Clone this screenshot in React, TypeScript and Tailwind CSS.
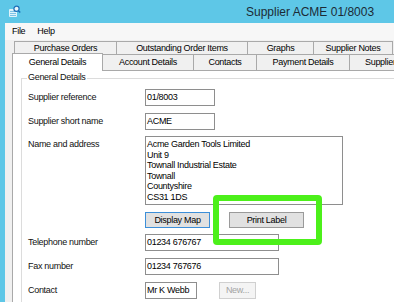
import React from "react";

const font = "font-['Liberation_Sans',Arial,sans-serif]";

function Row({ label, children, className = "" }: { label: string; children: React.ReactNode; className?: string }) {
  return (
    <div className={`flex items-center h-[17px] ${className}`}>
      <div className="w-[117px] shrink-0 text-[#111]">{label}</div>
      {children}
    </div>
  );
}

function Input({ value, w }: { value: string; w: string }) {
  return (
    <div className={`${w} h-[17px] border border-[#8e8e8e] bg-white pl-[1px] flex items-center text-black whitespace-nowrap overflow-hidden`}>
      {value}
    </div>
  );
}

export default function App() {
  return (
    <div className={`w-[394px] h-[302px] overflow-hidden bg-[#5ec7e7] ${font} text-[9px] leading-[11px] tracking-[-0.3px] relative`}>
      {/* title bar */}
      <div className="h-[23px] flex items-center">
        <svg className="ml-[8px] shrink-0" width="13" height="13" viewBox="0 0 13 13">
          <rect x="1" y="4" width="8" height="8" rx="1" fill="#dff3fb" />
          <rect x="2" y="6" width="6" height="1" fill="#7fc3e6" />
          <rect x="2" y="8" width="6" height="1" fill="#7fc3e6" />
          <rect x="2" y="10" width="6" height="1" fill="#7fc3e6" />
          <circle cx="8.5" cy="3.8" r="2.6" fill="#eaf7fd" stroke="#1d6fb8" strokeWidth="1.2" />
          <line x1="10.4" y1="5.7" x2="12.2" y2="7.5" stroke="#1d6fb8" strokeWidth="1.5" />
        </svg>
        <div className="ml-[225px] text-[12px] tracking-normal leading-[16px] text-[#1c2b36] whitespace-nowrap">
          Supplier ACME 01/8003
        </div>
      </div>

      {/* window body */}
      <div className="ml-[5px] h-[279px] bg-[#f0f0f0] flex flex-col">
        {/* menu */}
        <div className="h-[17px] bg-[#f7f7f7] flex items-center pl-[7px] gap-[12px] text-black">
          <span>File</span>
          <span>Help</span>
        </div>

        {/* tab row 1 */}
        <div className="mt-[1px] ml-[9px] flex h-[13px] whitespace-nowrap text-black">
          <div className="w-[102px] border-l border-t border-[#a9a9a9] flex items-center justify-center">Purchase Orders</div>
          <div className="w-[131px] border-l border-t border-[#a9a9a9] flex items-center justify-center">Outstanding Order Items</div>
          <div className="w-[66px] border-l border-t border-[#a9a9a9] flex items-center justify-center">Graphs</div>
          <div className="w-[80px] border-l border-r border-t border-[#a9a9a9] flex items-center justify-center">Supplier Notes</div>
        </div>

        {/* tab row 2 */}
        <div className="ml-[7px] flex items-end h-[16px] whitespace-nowrap text-black">
          <div className="w-[91px] shrink-0 h-[18px] -mb-[1px] relative z-10 bg-white border-l border-t border-r border-[#a9a9a9] flex items-center justify-center pb-[1px]">
            General Details
          </div>
          <div className="w-[91px] shrink-0 h-[16px] border-t border-r border-[#a9a9a9] flex items-center justify-center">Account Details</div>
          <div className="w-[63px] shrink-0 h-[16px] border-t border-r border-[#a9a9a9] flex items-center justify-center">Contacts</div>
          <div className="w-[93px] shrink-0 h-[16px] border-t border-r border-[#a9a9a9] flex items-center justify-center">Payment Details</div>
          <div className="w-[110px] shrink-0 h-[16px] border-t border-r border-[#a9a9a9] flex items-center pl-[15px]">Supplier Invoices</div>
        </div>

        {/* panel */}
        <div className="ml-[7px] flex-1 bg-white border-t border-l border-[#a9a9a9] pt-[7px] pl-[8px]">
          <div className="relative h-full border-t border-l border-[#dcdcdc] pt-[10px] pl-[6px]">
            <div className="absolute top-[-7px] left-[5px] bg-white px-[1px] text-[#111] whitespace-nowrap">General Details</div>

            <Row label="Supplier reference">
              <Input value="01/8003" w="w-[70px]" />
            </Row>
            <Row label="Supplier short name" className="mt-[7px]">
              <Input value="ACME" w="w-[70px]" />
            </Row>

            <div className="flex mt-[6px]">
              <div className="w-[117px] shrink-0 pt-[3px] text-[#111]">Name and address</div>
              <div className="w-[198px] h-[69px] border border-[#8e8e8e] bg-white pl-[1px] pt-[2px] leading-[10.5px] text-black whitespace-nowrap overflow-hidden">
                <div>Acme Garden Tools Limited</div>
                <div>Unit 9</div>
                <div>Townall Industrial Estate</div>
                <div>Townall</div>
                <div>Countyshire</div>
                <div>CS31 1DS</div>
              </div>
            </div>

            <div className="flex mt-[7px] pl-[117px] gap-[19px]">
              <div className="w-[65px] h-[16px] bg-[#e1e1e1] border border-[#3d8fd8] flex items-center justify-center text-black whitespace-nowrap">
                Display Map
              </div>
              <div className="w-[75px] h-[16px] bg-[#e1e1e1] border border-[#9a9a9a] flex items-center justify-center text-black whitespace-nowrap">
                Print Label
              </div>
            </div>

            <Row label="Telephone number" className="mt-[6px]">
              <Input value="01234 676767" w="w-[134px]" />
            </Row>
            <Row label="Fax number" className="mt-[7px]">
              <Input value="01234 767676" w="w-[134px]" />
            </Row>
            <Row label="Contact" className="mt-[7px]">
              <Input value="Mr K Webb" w="w-[52px]" />
              <div className="ml-[22px] w-[37px] h-[17px] bg-[#f4f4f4] border border-[#d0d0d0] flex items-center justify-center text-[#a3a3a3]">
                New...
              </div>
            </Row>
          </div>
        </div>
      </div>

      {/* green highlight */}
      <div className="absolute left-[213px] top-[195px] w-[109px] h-[50px] border-[6px] border-[#4cf01a] rounded-[4px] pointer-events-none" />
    </div>
  );
}
